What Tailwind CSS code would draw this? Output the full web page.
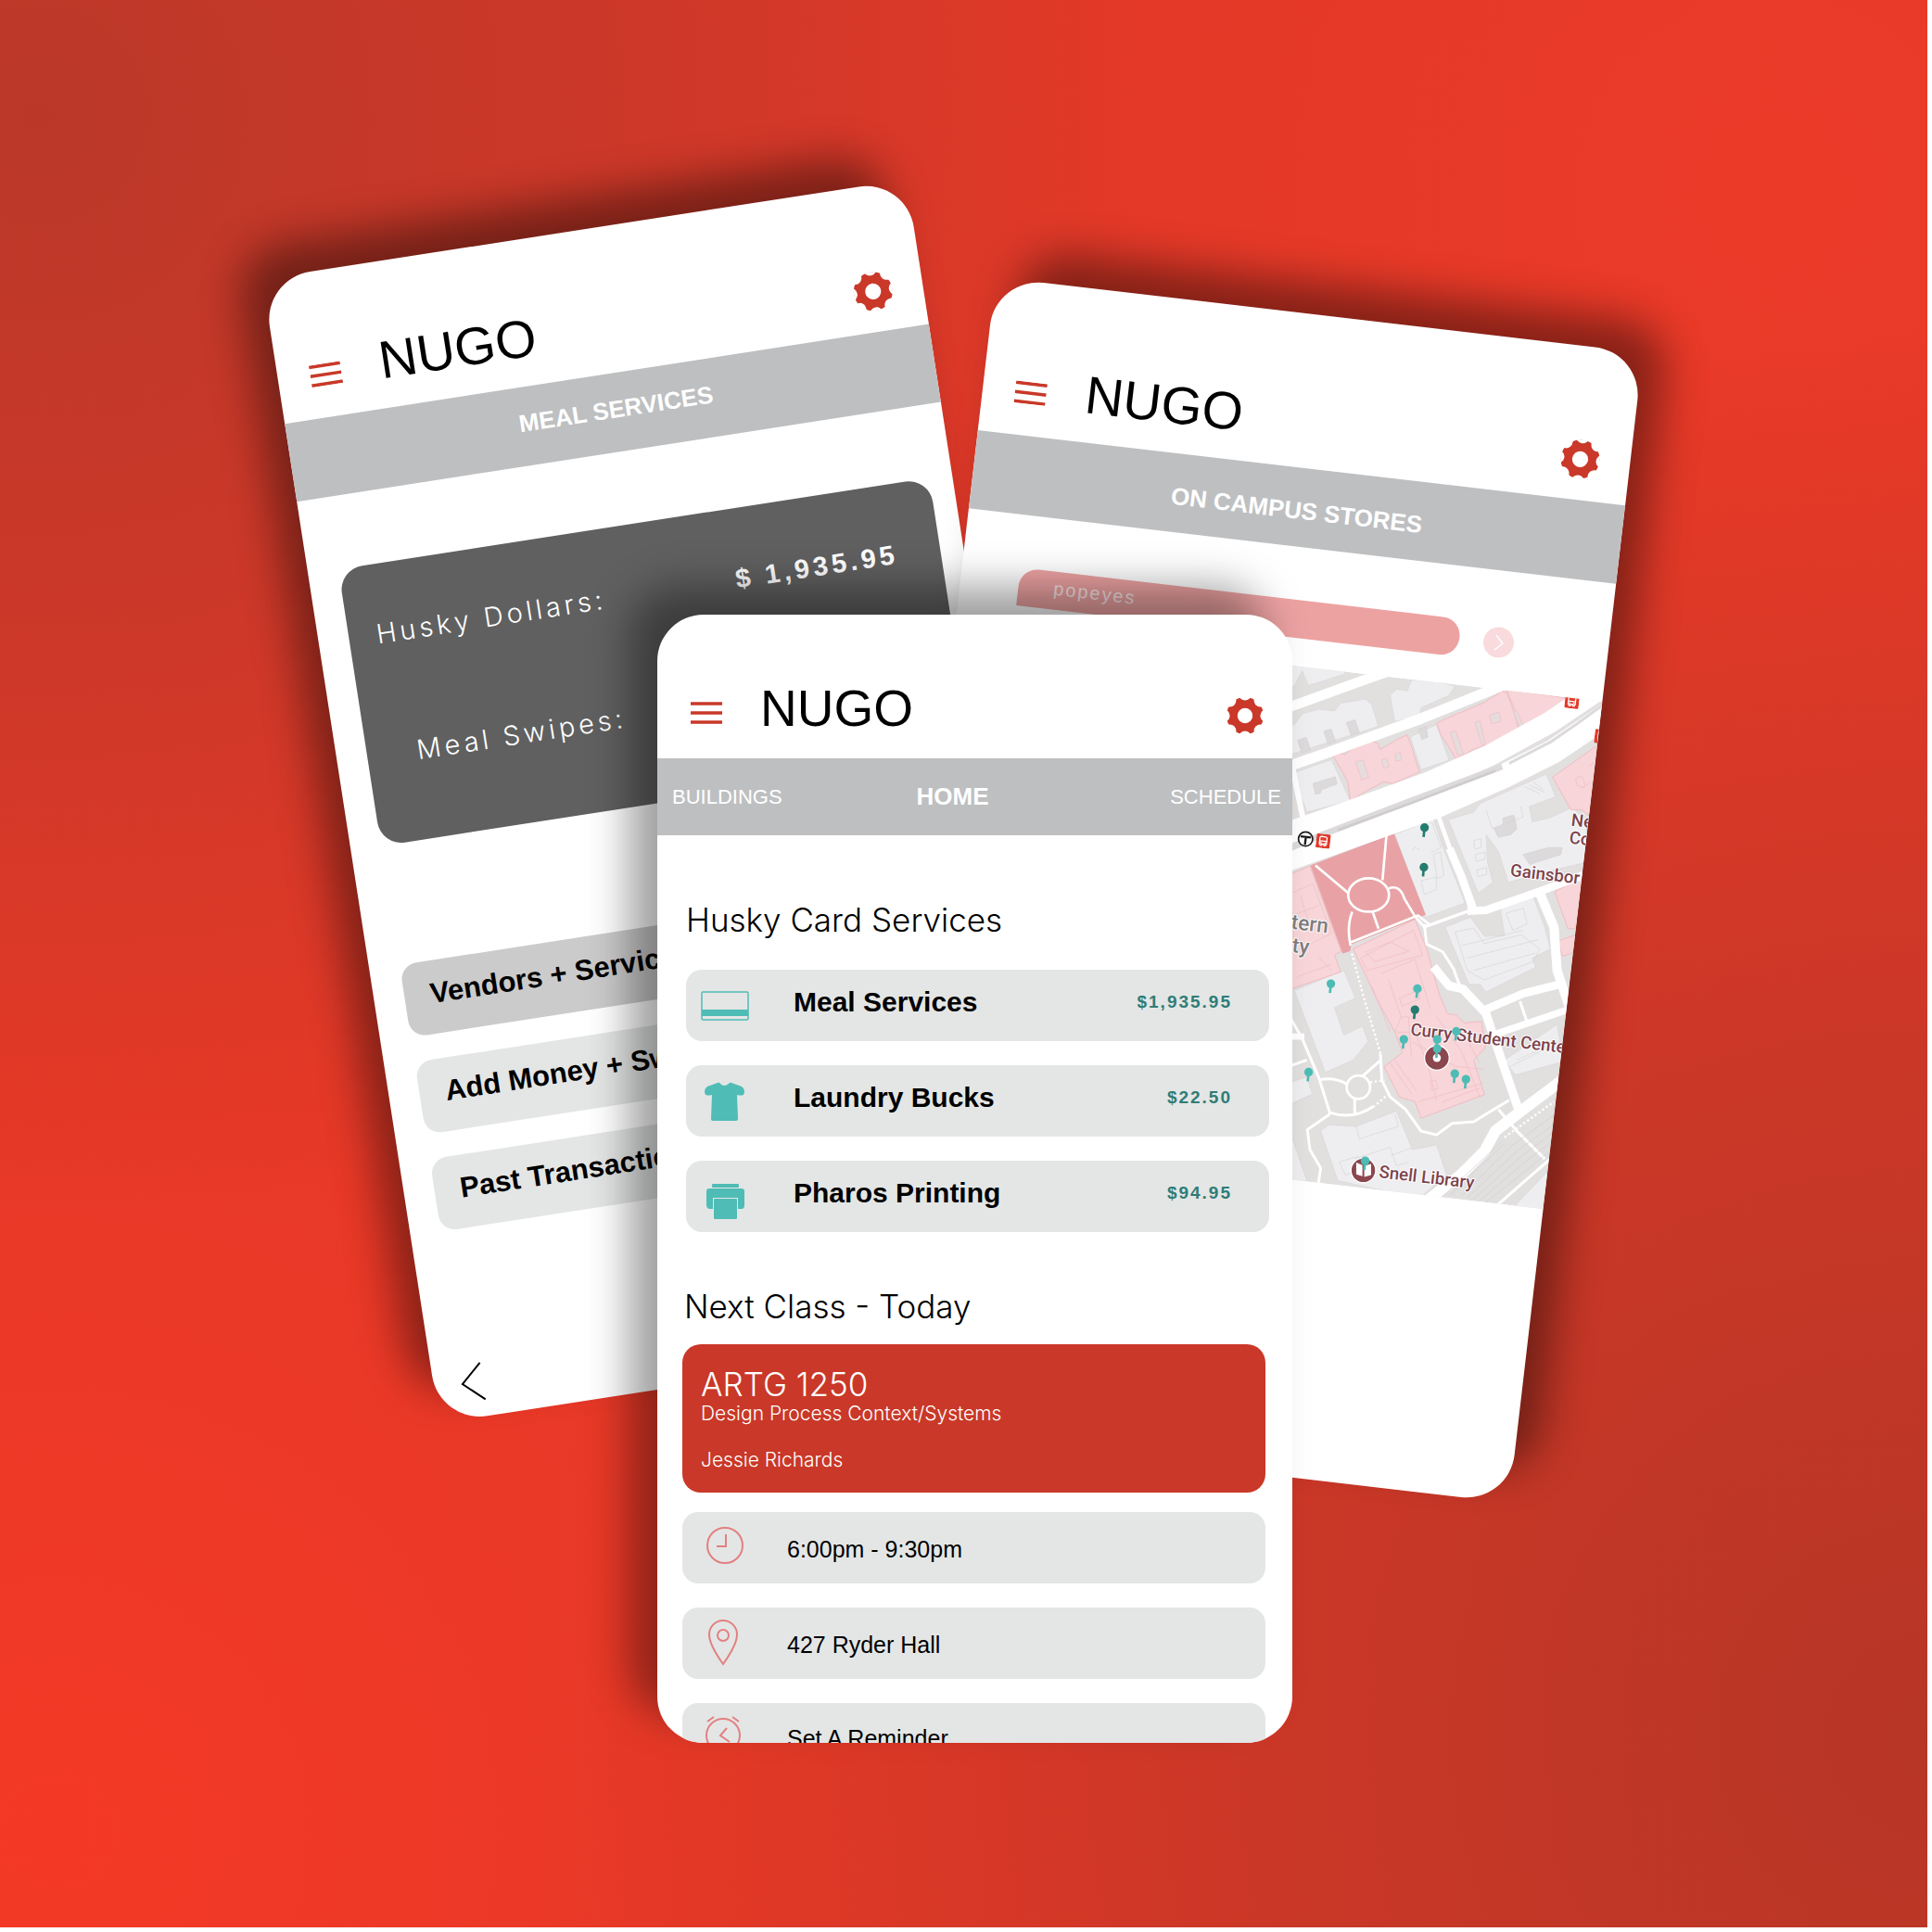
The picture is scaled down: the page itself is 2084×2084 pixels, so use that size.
<!DOCTYPE html>
<html lang="en">
<head>
<meta charset="utf-8">
<meta name="viewport" content="width=device-width, initial-scale=1">
<title>NUGO</title>
<script src="https://cdn.jsdelivr.net/npm/@tailwindcss/browser@4"></script>
</head>
<body class="bg-white pr-[5px] pb-[5px] font-['Liberation_Sans',Arial,sans-serif] text-black">

<svg class="hidden">
  <symbol id="menu" viewBox="0 0 34 24">
    <path d="M0 2H34M0 12H34M0 22H34" stroke="#c93828" stroke-width="3.500" fill="none"/>
  </symbol>
  <symbol id="gear" viewBox="-20 -20 40 40">
    <circle r="20" fill="#c93828"/>
    <g fill="#fff">
      <circle r="8.2"/>
      <circle cx="0" cy="-23.2" r="6.800"/><circle cx="0" cy="23.2" r="6.800"/>
      <circle cx="23.2" cy="0" r="6.800"/><circle cx="-23.2" cy="0" r="6.800"/>
      <circle cx="16.4" cy="16.4" r="6.800"/><circle cx="-16.4" cy="16.4" r="6.800"/>
      <circle cx="16.4" cy="-16.4" r="6.800"/><circle cx="-16.4" cy="-16.4" r="6.800"/>
    </g>
  </symbol>
  <symbol id="pin" viewBox="-16 -16 32 52" overflow="visible">
    <path d="M0 0L-3 30" stroke="currentColor" stroke-width="8"/>
    <circle r="14" fill="currentColor"/>
  </symbol>
  <symbol id="bus" viewBox="0 0 48 48">
    <rect width="48" height="48" rx="5" fill="#e23a2c"/>
    <path d="M12 14q0-5 5-5h14q5 0 5 5v20h-3v5h-5v-5h-8v5h-5v-5h-3z" fill="none" stroke="#fff" stroke-width="4"/>
    <path d="M12 24h24" stroke="#fff" stroke-width="4"/>
    <circle cx="17" cy="30" r="2.500" fill="#fff"/><circle cx="31" cy="30" r="2.500" fill="#fff"/>
  </symbol>
</svg>

<main class="flex min-h-[calc(100vh-5px)] justify-center overflow-hidden bg-[#dc3828] bg-[radial-gradient(circle_at_2%_6%,#bb3829_0%,#bb382900_42%),radial-gradient(circle_at_100%_90%,#b73626_0%,#b7362600_54%),radial-gradient(circle_at_92%_10%,#ec3a28_0%,#ec3a2800_48%),radial-gradient(circle_at_3%_95%,#f33926_0%,#f3392600_58%)]">
  <div class="relative w-[1501px] shrink-0 pt-[663px] pb-[199px]">

    <!-- Meal services screen -->
    <section class="absolute top-[301px] left-[-6px] h-[1249px] w-[703px] origin-top-left -rotate-[8.8deg] overflow-hidden rounded-[52px] bg-white shadow-[-25px_-34px_45px_rgba(0,0,0,0.42)]">
      <header class="flex h-[158px] items-end pr-[33px] pb-[23px] pl-[35px]">
        <button class="mb-[11px]" aria-label="Menu"><svg class="h-6 w-[34px]"><use href="#menu"/></svg></button>
        <h1 class="ml-[42px] text-[57px] leading-[58px]">NUGO</h1>
        <button class="ml-auto" aria-label="Settings"><svg class="size-[42px]"><use href="#gear"/></svg></button>
      </header>
      <h2 class="flex h-[85px] items-center justify-center bg-[#bebfc1] pb-[6px] pl-[8px] text-[26px] font-bold text-white">MEAL SERVICES</h2>
      <dl class="mt-[79px] ml-[33px] h-[302px] w-[645px] rounded-[26px] bg-[#606060] pt-[60px] text-[29px] leading-8 tracking-[4px] text-white">
        <div class="flex justify-between pr-[46px] pl-[30px]">
          <dt class="font-['Inter'] font-light">Husky Dollars:</dt>
          <dd class="font-bold">$ 1,935.95</dd>
        </div>
        <div class="mt-[98px] pl-[54px]">
          <dt class="font-['Inter'] font-light">Meal Swipes:</dt>
        </div>
      </dl>
      <nav class="mt-[130px] ml-[33px] flex w-[645px] flex-col gap-[27px] text-[31px] font-bold">
        <a href="#" class="flex h-[79px] items-center rounded-[18px] bg-[#cbcbcb] pb-[6px] pl-7">Vendors + Services</a>
        <a href="#" class="flex h-[79px] items-center rounded-[18px] bg-[#e4e6e5] pb-[6px] pl-7">Add Money + Swipes</a>
        <a href="#" class="flex h-[79px] items-center rounded-[18px] bg-[#e4e6e5] pb-[6px] pl-7">Past Transactions</a>
      </nav>
      <button class="mt-[144px] ml-[29px]" aria-label="Back">
        <svg class="h-11 w-7" viewBox="0 0 28 44" fill="none" stroke="#000" stroke-width="2"><path d="M24 2L2 22L24 42"/></svg>
      </button>
    </section>

    <!-- On campus stores screen -->
    <section class="absolute top-[299px] left-[785px] h-[1249px] w-[703px] origin-top-left rotate-[6.65deg] overflow-hidden rounded-[52px] bg-white shadow-[26px_-33px_45px_rgba(0,0,0,0.42)]">
      <header class="flex h-[166px] items-end pr-[33px] pb-[23px] pl-[35px]">
        <button class="mb-[11px]" aria-label="Menu"><svg class="h-6 w-[34px]"><use href="#menu"/></svg></button>
        <h1 class="ml-[42px] text-[57px] leading-[58px]">NUGO</h1>
        <button class="ml-auto" aria-label="Settings"><svg class="size-[42px]"><use href="#gear"/></svg></button>
      </header>
      <h2 class="flex h-[85px] items-center justify-center bg-[#bebfc1] pt-[8px] text-[26px] font-bold text-white">ON CAMPUS STORES</h2>
      <form class="mt-[57px] ml-[63px] flex items-center gap-[26px]">
        <input type="text" value="popeyes" aria-label="Search stores" class="h-[41px] w-[479px] rounded-[20px] rounded-bl-none bg-[#eda2a2] pb-1 pl-[38px] text-[20px] tracking-[2px] text-white/75">
        <button type="button" aria-label="Search" class="flex size-[33px] items-center justify-center rounded-full bg-[#f9dadd]">
          <svg class="h-[18px] w-[10px]" viewBox="0 0 10 18" fill="none" stroke="#fff" stroke-width="1.500"><path d="M1 1L9 9L1 17"/></svg>
        </button>
      </form>
      <svg class="mt-[30px] block h-[551px] w-[703px]" viewBox="0 0 703 551" role="img" aria-label="Campus map">
        <rect width="703" height="551" fill="#e2dfdf"/>
        <g transform="translate(0 -379) rotate(-6.65) translate(-1074.4 -298.9) translate(1390 700) scale(.33333)">
          <!-- buildings -->
          <g fill="#eeeef0" stroke="#d9d6d8" stroke-width="2">
            <path d="M-20 40L190 60L180 82L65 118L45 70L20 120L-20 130z"/>
            <path d="M-20 250L20 245L45 210L100 195L150 200L170 175L250 162L270 180L292 250L-20 350z"/>
            <path d="M20 400L140 358L200 490L60 528L50 500L20 430z"/>
            <path d="M330 150L350 130L385 135L400 100L440 95L540 120L520 150L430 190L425 215L345 235z"/>
            <path d="M395 285L440 262L480 245L520 360L430 390z"/>
            <path d="M345 600L470 550L500 640L572 822L445 868z"/>
            <path d="M518 552L600 528L620 500L835 405L865 478L780 510L790 560L850 545L920 512L965 560L965 690L840 720L712 755L680 655L640 600L645 690L662 755L615 790z"/>
            <path d="M508 900L590 868L635 930L700 928L685 830L792 800L830 900L848 970L790 1000L800 1030L640 1110L620 1085L585 1085L540 980z"/>
            <path d="M700 1330L870 1215L890 1335L735 1378z"/>
            <path d="M20 1105L180 1040L217 1130L150 1160L180 1250L240 1220L258 1270L210 1330L120 1370z"/>
            <path d="M-20 1410L60 1385L78 1440L-20 1485z"/>
            <path d="M105 1560L130 1540L220 1545L350 1495L402 1620L480 1605L512 1700L430 1772L380 1768L160 1720z"/>
            <path d="M-20 1560L12 1580L60 1720L-20 1740z"/>
            <path d="M735 1800L840 1690L820 1840z"/>
          </g>
          <!-- building details -->
          <g fill="#dddadb" stroke="#d3d0d2" stroke-width="2">
            <path d="M30 295l28-9 14 40-28 10zM115 266l24-7 14 40-24 9zM188 238l28-9 14 42-26 9z"/>
            <path d="M80 435l72-22 6 24-50 18-4 12-16 3z"/>
            <path d="M422 260l24-9 6 34-20 8z"/>
            <path d="M760 665l80-22 46 0-4 22-80 25-20 8z"/>
            <path d="M665 580l30-8v-25l35-10 10 44-20 20-40 8z"/>
          </g>
          <g fill="none" stroke="#d6d3d5" stroke-width="2">
            <path d="M470 665l22-8 12 76-22 10zM430 750l48-12 2 40-40 16zM400 650l12-8 14 8M465 560l30 82-34 18"/>
            <path d="M600 620l24-6v28l-20 6zM605 665l32-8v22l-28 8zM610 715l32-8v22l-28 8z"/>
            <path d="M640 520l20 60 100-36-8-34M765 445l50 24M780 440l50 24M795 432l30 24"/>
            <path d="M540 915l60-12 34 50 120-28 60 46-20 40-160 60-54-30zM560 960l200-50M580 1000l230-60M600 1040l200-56"/>
            <path d="M705 855l56-16 12 50-46 22zM215 1650l115-38 20 60 40-12M165 1660l60-18 20 40-60 20zM330 1640l70-26M220 1545l10 40 126-40-10-40"/>
            <path d="M720 1350l160-80M740 1330l130-60"/>
          </g>
          <!-- campus buildings -->
          <g fill="#f7d5d8" stroke="#f0bcc1" stroke-width="3" stroke-linejoin="round">
            <path d="M145 345l20-8 18 4 20-16 40-16 26-12 22 8 6 20 60-35 28-12 15 40 12 40 13 40-88 38-28-6-50 26-58 35-8-60-18-34z"/>
            <path d="M480 240l60-28 26-10 70-30 56-36 16 6 25 70 15 56-52 26-36 12-60 18-38 22-20 10-14-26-8-12-26-40z"/>
            <path d="M705 130L897 158L880 185L762 264z"/>
            <path d="M855 415L1030 290L1000 560L950 520L915 520z"/>
            <path d="M862 785L960 735L930 905L905 905z"/>
            <path d="M872 945L930 925L925 980L888 995z"/>
            <path d="M-20 740L70 702L172 978L150 990L170 1045L-20 1110z"/>
            <path d="M210 970L410 875L450 975L470 1050L490 1120L515 1180L545 1185L570 1210L625 1205L638 1290L600 1330L635 1442L430 1518L410 1465L360 1450L310 1352L370 1305L345 1240L285 1130L250 1055z"/>
          </g>
          <g fill="#e4dcdd" stroke="#f0bcc1" stroke-width="2">
            <path d="M218 365l24-6 18 56-22 8zM302 358l16-4 8 26-18 6zM345 340l18-5 4 24-18 4zM525 270l16-6 26 74-18 8zM604 238l16-6 18 76-10 4zM652 214l30-10 6 30-30 8zM728 202l12-4 22 58-10 6z"/>
          </g>
          <g fill="none" stroke="#f0bcc1" stroke-width="2">
            <path d="M235 1000l170-90 30 80-180 50zM250 980l80-32 60 30-110 34zM300 1050l110-46 50 160M325 1070l40 120-20 50M360 1130l60-25 8 26-60 25zM365 1190l24 0 10 130M460 1400l16-6 8 28-20 6zM480 1190l80 110 60 150M350 1240l60 0 40 100 30 120M420 1465l210-60M500 1465l120-44M330 1340l70 100M345 1330l70 100M400 1270l140 80 90 10M560 1230l60 110M270 1090l60 150"/>
            <path d="M10 790l70-30 60 160-120 60zM40 800l30 100M20 860l80-30M30 1060l110-40M100 1000l40 40M930 420q20-20 28 10t-24 10zM950 450l30-20M970 380l20-12"/>
          </g>
          <!-- park -->
          <path d="M72 700L342 596L445 860L205 955L200 978L176 985z" fill="#e8a2a5"/>
          <!-- roads -->
          <g fill="none" stroke="#fff" stroke-linejoin="round">
            <path d="M-30 200L260 95L420 40" stroke-width="32"/>
            <path d="M-30 390L120 338L430 225L620 148L760 90" stroke-width="34"/>
            <path d="M-30 605L200 525L460 430L650 345L850 235L1050 100" stroke-width="70"/>
            <path d="M-30 690L150 625L480 508L700 410L860 330L1060 195" stroke-width="78"/>
            <path d="M15 390L50 560" stroke-width="18"/>
            <path d="M482 530L525 650L560 740L590 840" stroke-width="14"/>
            <path d="M522 645L560 735L598 840" stroke-width="26"/>
            <path d="M580 848L640 845L820 782L1000 715" stroke-width="26"/>
            <path d="M812 785L860 900L870 1040L910 1160" stroke-width="30"/>
            <path d="M438 900L600 842" stroke-width="10"/>
            <path d="M440 890L448 955L500 980L535 1035L555 1090" stroke-width="9"/>
            <path d="M470 1028L520 1090L565 1100L640 1180L680 1300L745 1490" stroke-width="28"/>
            <path d="M635 1168L760 1115L890 1082" stroke-width="26"/>
            <path d="M675 1245L910 1165" stroke-width="22"/>
            <path d="M750 1140L772 1205" stroke-width="9"/>
            <path d="M430 1800L560 1700L635 1625L670 1560L760 1490L900 1385" stroke-width="36"/>
            <path d="M-10 1165L45 1260L100 1390L135 1502M105 1393Q150 1385 190 1408M300 1330L240 1382M298 1310L303 1395L330 1450L380 1490L430 1560L480 1572L530 1535L600 1530L640 1505L715 1460M215 1455V1505M135 1500Q210 1525 275 1480M135 1505L62 1555L70 1620L105 1680L95 1745M-10 1355L60 1330M680 1490L740 1560L830 1650M670 1805L790 1700L860 1640" stroke-width="9"/>
            <path d="M12 1254L52 1254" stroke-width="20"/>
            <circle cx="227" cy="1418" r="38" stroke-width="8"/>
            <path d="M206 985L245 1130L290 1280L298 1310M265 1402L312 1395M275 1482L325 1440M700 1580L860 1465" stroke-width="7" stroke-dasharray="7 8"/>
            <g stroke-width="8">
              <path d="M88 700L195 790M318 600L305 748M325 775Q360 760 376 808L410 865L445 905M207 850Q188 900 202 960M273 850L292 905M200 950L420 862L458 892"/>
              <ellipse cx="260" cy="796" rx="66" ry="54"/>
            </g>
          </g>
          <!-- medians and rail lines -->
          <g fill="none" stroke="#dddadb">
            <path d="M-20 655L120 597L400 490L692 380" stroke-width="20"/>
            <path d="M715 370L850 300L930 245L1020 180" stroke-width="9"/>
          </g>
          <path d="M160 586L400 498L670 394" fill="none" stroke="#cfcccd" stroke-width="8"/>
          <g fill="none" stroke="#d2cfd0" stroke-width="2">
            <path d="M560 1770L720 1610L870 1500M580 1775L740 1625L870 1530M600 1780L750 1645L870 1555M620 1785L760 1665L870 1580M640 1790L780 1680L870 1605M520 1770L700 1600M490 1780L690 1595"/>
          </g>
          <!-- transit badges -->
          <circle cx="-13" cy="611" r="22" fill="#fff" stroke="#e23a2c" stroke-width="5"/>
          <circle cx="56" cy="615" r="23" fill="#fff" stroke="#1b1b1b" stroke-width="5"/>
          <path d="M40 606L73 610M57 608L54 634" stroke="#1b1b1b" stroke-width="7"/>
          <use href="#bus" width="46" height="46" transform="translate(93 596) rotate(6.65)"/>
          <use href="#bus" width="46" height="46" transform="translate(898 144) rotate(6.65)"/>
          <use href="#bus" width="46" height="46" transform="translate(994 258) rotate(6.65)"/>
          <!-- place markers -->
          <g stroke="#fff" stroke-width="4" fill="#8b474e">
            <circle cx="481" cy="1323" r="40"/><circle cx="243" cy="1687" r="40"/>
          </g>
          <circle cx="481" cy="1323" r="13" fill="#fff"/>
          <path d="M220 1662l20 8v36l-20-6zM268 1666l-22 6v36l22-6z" fill="#fff"/>
          <!-- labels -->
          <g font-family="Roboto, sans-serif" font-size="56" font-weight="500" fill="#7c434c" stroke="#fff" stroke-width="6" stroke-linejoin="round" paint-order="stroke">
            <text transform="translate(914 571) rotate(6.65)">Ne</text>
            <text transform="translate(908 628) rotate(6.65)">Co</text>
            <text transform="translate(717 734) rotate(6.65)">Gainsbor</text>
            <text transform="translate(394 1249) rotate(6.65)">Curry Student Cente</text>
            <text transform="translate(292 1710) rotate(6.65)">Snell Library</text>
            <g font-size="68" fill="#807d7d" text-anchor="end">
              <text transform="translate(127 919) rotate(6.65)">tern</text>
              <text transform="translate(66 987) rotate(6.65)">ty</text>
            </g>
          </g>
          <!-- store pins -->
          <g color="#247c70">
            <use href="#pin" x="425" y="562" width="32" height="52"/><use href="#pin" x="423" y="690" width="32" height="52"/>
            <use href="#pin" x="394" y="1151" width="32" height="52"/>
          </g>
          <g color="#4dbcb4">
            <use href="#pin" x="122" y="1067" width="32" height="52"/><use href="#pin" x="402" y="1083" width="32" height="52"/>
            <use href="#pin" x="528" y="1221" width="32" height="52"/><use href="#pin" x="358" y="1247" width="32" height="52"/>
            <use href="#pin" x="466" y="1247" width="32" height="52"/><use href="#pin" x="466" y="1277" width="32" height="52"/>
            <use href="#pin" x="50" y="1353" width="32" height="52"/><use href="#pin" x="523" y="1358" width="32" height="52"/>
            <use href="#pin" x="559" y="1376" width="32" height="52"/><use href="#pin" x="233" y="1640" width="32" height="52"/>
          </g>
        </g>
      </svg>
    </section>

    <!-- Home screen -->
    <section class="relative ml-[420px] h-[1217px] w-[685px] overflow-hidden rounded-[50px] bg-white shadow-[-30px_-30px_45px_rgba(0,0,0,0.38)]">
      <header class="flex h-[155px] items-end pr-[31px] pb-[26px] pl-[36px]">
        <button class="mb-[11px]" aria-label="Menu"><svg class="h-6 w-[34px]"><use href="#menu"/></svg></button>
        <h1 class="ml-[41px] text-[55px] leading-[56px]">NUGO</h1>
        <button class="ml-auto" aria-label="Settings"><svg class="size-[40px]"><use href="#gear"/></svg></button>
      </header>
      <nav class="flex h-[83px] items-center bg-[#bebfc1] pr-3 pl-4 text-[22px] text-white">
        <a href="#">BUILDINGS</a>
        <a href="#" class="ml-[145px] text-[26px] font-bold">HOME</a>
        <a href="#" class="ml-auto">SCHEDULE</a>
      </nav>
      <h2 class="mt-[71px] ml-[31px] font-['Inter'] text-[35px] leading-10 font-light">Husky Card Services</h2>
      <ul class="mt-[34px] ml-[31px] flex w-[629px] flex-col gap-[26px]">
        <li class="flex h-[77px] items-center rounded-[17px] bg-[#e4e6e5] pr-[40px] pl-4">
          <svg class="h-11 w-[52px]" viewBox="0 0 52 44" fill="none" stroke="#4fbcb6" stroke-width="1.500">
            <rect x="1" y="7" width="50" height="30" rx="1.500"/><path d="M1 29.500H51" stroke-width="7"/>
          </svg>
          <span class="ml-[48px] pb-[9px] text-[30px] font-bold">Meal Services</span>
          <span class="ml-auto pb-[7px] text-[19px] font-bold tracking-[2px] text-[#2f7d76]">$1,935.95</span>
        </li>
        <li class="flex h-[77px] items-center rounded-[17px] bg-[#e4e6e5] pr-[40px] pl-4">
          <svg class="h-11 w-[52px]" viewBox="0 0 52 44" fill="#4fbcb6">
            <path d="M18 2Q20 1 21 3Q25 7 30 3Q31 1 33 2L44 6Q47 8 47 12L46 15Q43 16 39 15L40 41Q40 43 38 43H13Q11 43 11 41L12 15Q8 16 5 15L4 12Q4 8 7 6z"/>
          </svg>
          <span class="ml-[48px] pb-[9px] text-[30px] font-bold">Laundry Bucks</span>
          <span class="ml-auto pb-[7px] text-[19px] font-bold tracking-[2px] text-[#2f7d76]">$22.50</span>
        </li>
        <li class="flex h-[77px] items-center rounded-[17px] bg-[#e4e6e5] pr-[40px] pl-4">
          <svg class="h-12 w-[52px]" viewBox="0 0 52 48" fill="#4fbcb6">
            <rect x="12" y="10" width="29" height="4" rx="1"/>
            <path d="M9 15H44Q47 15 47 18V33Q47 37 44 37H40V25H13V37H10Q6 37 6 33V18Q6 15 9 15z"/>
            <rect x="14" y="26" width="25" height="22" rx="1"/>
          </svg>
          <span class="ml-[48px] pb-[9px] text-[30px] font-bold">Pharos Printing</span>
          <span class="ml-auto pb-[7px] text-[19px] font-bold tracking-[2px] text-[#2f7d76]">$94.95</span>
        </li>
      </ul>
      <h2 class="mt-[60px] ml-[29px] font-['Inter'] text-[35px] leading-10 font-light">Next Class - Today</h2>
      <article class="mt-[21px] ml-[27px] h-[160px] w-[629px] rounded-[20px] bg-[#c93828] pt-[23px] pl-[20px] font-['Inter'] text-[21px] leading-6 font-light text-white">
        <h3 class="text-[35px] leading-10">ARTG 1250</h3>
        <p>Design Process Context/Systems</p>
        <p class="mt-[26px]">Jessie Richards</p>
      </article>
      <ul class="mt-[21px] ml-[27px] flex w-[629px] flex-col gap-[26px] text-[25px]">
        <li class="flex h-[77px] items-center rounded-[17px] bg-[#e4e6e5] pl-[20px]">
          <svg class="h-[77px] w-[52px]" viewBox="0 0 52 77" fill="none" stroke="#e28081" stroke-width="2">
            <circle cx="26" cy="36" r="19"/><path d="M27 24V37H17"/>
          </svg>
          <span class="ml-[41px] pt-[5px]">6:00pm - 9:30pm</span>
        </li>
        <li class="flex h-[77px] items-center rounded-[17px] bg-[#e4e6e5] pl-[20px]">
          <svg class="h-[77px] w-[52px]" viewBox="0 0 52 77" fill="none" stroke="#e28081" stroke-width="2">
            <path d="M24 61Q9 40 9 29A15 15 0 0 1 39 29Q39 40 24 61z"/><circle cx="24" cy="30" r="6"/>
          </svg>
          <span class="ml-[41px] pt-[5px]">427 Ryder Hall</span>
        </li>
        <li class="flex h-[77px] items-center rounded-[17px] bg-[#e4e6e5] pl-[20px]">
          <svg class="h-[77px] w-[52px]" viewBox="0 0 52 77" fill="none" stroke="#e28081" stroke-width="2">
            <circle cx="24" cy="35" r="18"/><path d="M28 27L21 35L31 42M7 20L14 15M41 20L34 15"/>
          </svg>
          <span class="ml-[41px]">Set A Reminder</span>
        </li>
      </ul>
    </section>

  </div>
</main>
</body>
</html>
